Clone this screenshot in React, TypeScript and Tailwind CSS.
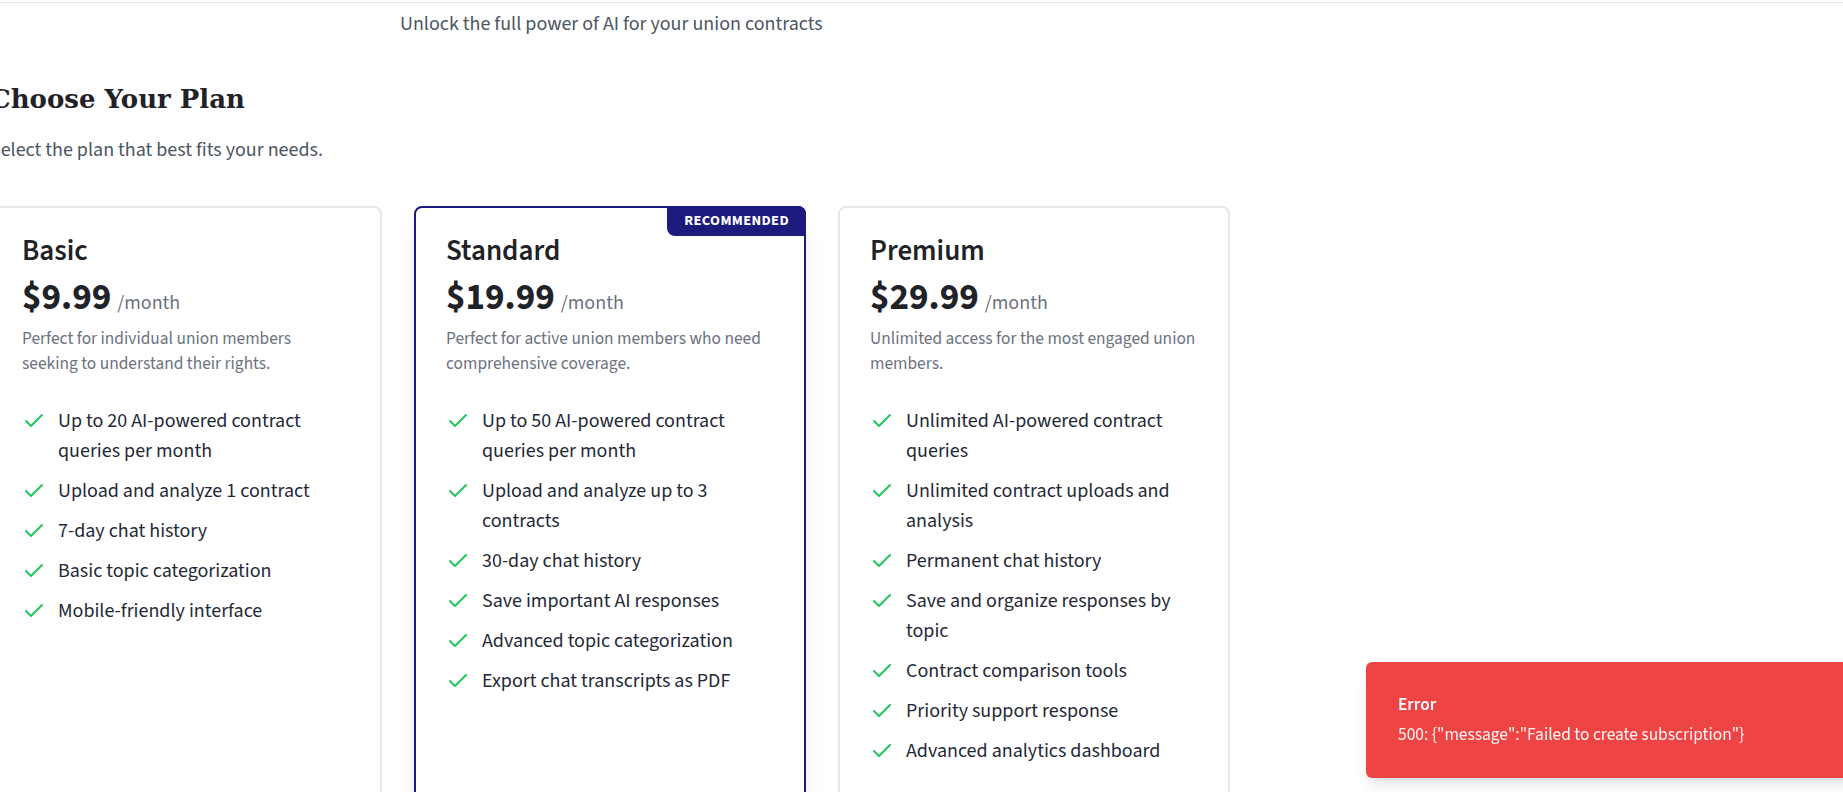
import { Check } from "lucide-react";

type Plan = {
  name: string;
  price: string;
  blurb: string;
  features: string[];
  recommended?: boolean;
};

const plans: Plan[] = [
  {
    name: "Basic",
    price: "$9.99",
    blurb: "Perfect for individual union members seeking to understand their rights.",
    features: [
      "Up to 20 AI-powered contract queries per month",
      "Upload and analyze 1 contract",
      "7-day chat history",
      "Basic topic categorization",
      "Mobile-friendly interface",
    ],
  },
  {
    name: "Standard",
    price: "$19.99",
    blurb: "Perfect for active union members who need comprehensive coverage.",
    recommended: true,
    features: [
      "Up to 50 AI-powered contract queries per month",
      "Upload and analyze up to 3 contracts",
      "30-day chat history",
      "Save important AI responses",
      "Advanced topic categorization",
      "Export chat transcripts as PDF",
    ],
  },
  {
    name: "Premium",
    price: "$29.99",
    blurb: "Unlimited access for the most engaged union members.",
    features: [
      "Unlimited AI-powered contract queries",
      "Unlimited contract uploads and analysis",
      "Permanent chat history",
      "Save and organize responses by topic",
      "Contract comparison tools",
      "Priority support response",
      "Advanced analytics dashboard",
    ],
  },
];

const PlanCard = ({ plan }: { plan: Plan }) => (
  <div
    className={
      plan.recommended
        ? "relative flex flex-col rounded-lg border-2 border-[#1c1a7d] bg-white px-[30px] pt-[26px] pb-24 shadow-xl"
        : "relative flex flex-col rounded-lg border-2 border-[#e5e7eb] bg-white px-[30px] pt-[26px] pb-24"
    }
  >
    {plan.recommended && (
      <span className="absolute -top-0.5 -right-0.5 rounded-tr-lg rounded-bl-lg bg-[#1c1a7d] px-[17px] py-[7px] text-[14.5px] leading-4 font-bold tracking-wide text-white">
        RECOMMENDED
      </span>
    )}
    <h3 className="text-[29px] leading-[34px] font-semibold text-[#1f2328]">{plan.name}</h3>
    <div className="mt-[10px] flex items-baseline">
      <span className="text-[37px] leading-10 font-bold text-[#1f2328]">{plan.price}</span>
      <span className="ml-1.5 text-xl text-[#6b7280]">/month</span>
    </div>
    <p className="mt-2 text-[17.4px] leading-[25px] text-[#6b7280]">{plan.blurb}</p>
    <ul className="mt-[30px] flex flex-col gap-[10px]">
      {plan.features.map((f) => (
        <li key={f} className="flex items-start gap-3">
          <Check className="mt-[3px] h-6 w-6 shrink-0 text-[#22c55e]" strokeWidth={2} />
          <span className="text-xl leading-[30px] text-[#1f2937]">{f}</span>
        </li>
      ))}
    </ul>
  </div>
);

export default function App() {
  return (
    <div className="min-h-screen overflow-hidden bg-white font-['Source_Sans_3','Lato',sans-serif]">
      <div className="h-[3px] border-b border-[#e5e7eb]" />
      <p className="mt-[7px] pl-[400px] text-xl leading-7 text-[#4b5563]">
        Unlock the full power of AI for your union contracts
      </p>
      <main className="-ml-2.5 mt-[43px] w-[1240px]">
        <h1 className="font-['DejaVu_Serif',serif] text-[26px] leading-9 font-bold text-[#1f2328]">
          Choose Your Plan
        </h1>
        <p className="mt-[19px] text-xl leading-7 text-[#4b5563]">
          Select the plan that best fits your needs.
        </p>
        <div className="mt-[42px] grid grid-cols-3 gap-8">
          {plans.map((p) => (
            <PlanCard key={p.name} plan={p} />
          ))}
        </div>
      </main>
      <div className="fixed top-[662px] left-[1366px] flex h-[116px] w-[520px] flex-col justify-center gap-1.5 rounded-md bg-[#ef4444] px-8 text-white shadow-lg">
        <p className="text-[17.4px] leading-6 font-semibold">Error</p>
        <p className="text-[17.4px] leading-6 text-white/95">
          500: {'{"message":"Failed to create subscription"}'}
        </p>
      </div>
    </div>
  );
}
